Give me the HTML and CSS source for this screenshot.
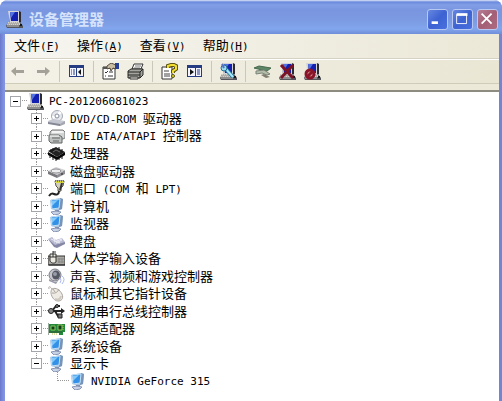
FILE: index.html
```
<!DOCTYPE html>
<html lang="zh-CN">
<head>
    <meta charset="UTF-8">
    <meta name="viewport" content="width=device-width, initial-scale=1.0">
    <title>设备管理器</title>
    <link rel="stylesheet" href="styles.css">
</head>
<body>
    <!-- 图标 -->
    <svg class="defs" aria-hidden="true">
        <symbol id="pc" viewBox="0 0 17 17">
            <path d="M3 0h10l2 1v10l-2 1H4z" fill="#2b2b33"/>
            <path d="M2 0h11v11H4z" fill="#d4d4d8"/>
            <path d="M4 1h8v9H5z" fill="#1420b0"/>
            <path d="M4 1h5L5 7z" fill="#5573e0"/>
            <path d="M2 11h12l3 4v2H1l-1-2z" fill="#55555c"/>
            <path d="M2 11h11l2 3H1z" fill="#d3d1ca"/>
            <path d="M3 12h9M2 13h11" stroke="#8a8a8a" stroke-dasharray="1 1"/>
            <path d="M1 15h12" stroke="#c9c7c0"/>
            <path d="M14 13h2v2h-2z" fill="#191919"/>
        </symbol>
        <symbol id="monitor" viewBox="0 0 17 17">
            <path d="M2 2l10-2 3 1-1 10-4 2-7-2z" fill="#a9c3dd"/>
            <path d="M12 0l3 1-1 10-3 1z" fill="#7793b8"/>
            <path d="M3 2l9-1-1 9-7 1z" fill="#3392e8" stroke="#c2dff5"/>
            <path d="M4 3l6-1-6 6z" fill="#84c9fa"/>
            <path d="M7 12h4v2H7z" fill="#7f90b0"/>
            <path d="M3 14l5-1 5 1-2 2-5 1z" fill="#c9d3e6" stroke="#8795b4"/>
        </symbol>
        <symbol id="disc" viewBox="0 0 17 17">
            <circle cx="9" cy="6" r="5.5" fill="#e5e7ed" stroke="#a5a9b4"/>
            <path d="M9 6l2-5 3 2zM9 6l-4 3-1-3z" fill="#fff"/>
            <circle cx="9" cy="6" r="2" fill="#fff" stroke="#888e9c"/>
            <path d="M0 11l5-2 12 2v2l-5 3-12-3z" fill="#c4c6d0"/>
            <path d="M0 12l12 2v2L0 14z" fill="#858895"/>
            <path d="M12 14l5-3v3l-5 2z" fill="#a4a6b0"/>
        </symbol>
        <symbol id="ide" viewBox="0 0 17 17">
            <path d="M4 2h11l2 2v6l-2 1H4L2 9V4z" fill="#d2d5d3" stroke="#777b79"/>
            <path d="M4 3h11l1 2H4z" fill="#f3f4f3"/>
            <path d="M1 7h10l3 2v6H3l-2-2z" fill="#bec2c0" stroke="#626664"/>
            <path d="M4 10h8M5 13h6" stroke="#666"/>
            <path d="M2 8h9" stroke="#fff"/>
        </symbol>
        <symbol id="cpu" viewBox="0 0 17 17">
            <path d="M0 6l8-4 9 5-8 5z" fill="#222"/>
            <path d="M0 7l9 5 8-5v3l-8 5-9-5z" fill="#050505"/>
            <path d="M3 4v3M5 3v3M11 2v3M14 4v3M2 9v4M5 11v4M8 13v3M11 12v3M14 10v4" stroke="#111"/>
            <path d="M5 7l3-2 4 2" fill="none" stroke="#666"/>
        </symbol>
        <symbol id="drive" viewBox="0 0 17 17">
            <path d="M0 8l8-4 9 3-8 5z" fill="#d0d0d3"/>
            <path d="M0 8l9 4v3l-9-4z" fill="#77777c"/>
            <path d="M9 12l8-5v4l-8 4z" fill="#8e8e94"/>
            <ellipse cx="8" cy="8" rx="5" ry="2" fill="#eee" stroke="#96969c"/>
            <path d="M13 11h2" stroke="#222"/>
        </symbol>
        <symbol id="port" viewBox="0 0 17 17">
            <path d="M7 1h9l-1 5-2 2v3h-3V8L8 6z" fill="#d2cfbd" stroke="#55534a"/>
            <path d="M7 2h9" stroke="#d9d93b" stroke-width="2"/>
            <path d="M7 1h9" stroke="#333" stroke-dasharray="1 1"/>
            <path d="M14 3l-2 7" stroke="#343434" stroke-width="2"/>
            <path d="M11 11c0 4-3 4-5 3s-3-1-5 2" fill="none" stroke="#222" stroke-width="2"/>
        </symbol>
        <symbol id="keyboard" viewBox="0 0 17 17">
            <path d="M0 6l4-2 4 3 6-2 3 4-5 4-5 1z" fill="#b8bad1"/>
            <path d="M0 6l7 6 10-3v2l-8 4-3-1z" fill="#8587a5"/>
            <path d="M3 6l9 4M6 9l8-3M5 5l2 2M8 10l6-3" stroke="#ececf7"/>
        </symbol>
        <symbol id="hid" viewBox="0 0 17 17">
            <path d="M0 6h17v9H0z" fill="#aaa9a3" stroke="#333"/>
            <path d="M2 4h6v8c-2 2-5 1-6-1z" fill="#eceae0" stroke="#333"/>
            <path d="M5 1v6M2 7h6M5 2h3" fill="none" stroke="#333"/>
            <path d="M10 9h6M10 12h6M11 8v5M14 8v5" stroke="#888"/>
            <path d="M1 15h16" stroke="#222"/>
        </symbol>
        <symbol id="sound" viewBox="0 0 17 17">
            <ellipse cx="7" cy="7" rx="6" ry="6" fill="#c4c5cd" stroke="#7b7c86"/>
            <ellipse cx="8" cy="7" rx="4" ry="4.5" fill="#555763"/>
            <circle cx="7" cy="6" r="2" fill="#989ba8"/>
            <path d="M1 11l6 3 3-1-2 3-7-3z" fill="#999ba7"/>
            <path d="M12 10q2 2 0 5M14 8q4 3 0 8" fill="none" stroke="#aab9ed"/>
        </symbol>
        <symbol id="mouse" viewBox="0 0 17 17">
            <path d="M4 4C2 1 0 1 1 4" fill="none" stroke="#b1aca6"/>
            <path d="M4 4c4-2 8 1 10 5 2 5-1 7-4 7-5 0-9-8-6-12z" fill="#eeeae4" stroke="#aaa49d"/>
            <path d="M4 8q5 1 7-4M7 7l-2-3" fill="none" stroke="#aaa49d"/>
            <path d="M7 14q5 2 6-3" fill="none" stroke="#cec8c0" stroke-width="2"/>
        </symbol>
        <symbol id="usb" viewBox="0 0 17 17">
            <path d="M2 8h13M4 8l4-5h4M7 8l3 5h4" fill="none" stroke="#222" stroke-width="2"/>
            <circle cx="3" cy="8" r="2.5" fill="#888" stroke="#222"/>
            <circle cx="9" cy="3" r="1.5" fill="#777" stroke="#222"/>
            <path d="M13 5l4 3-4 3z" fill="#222"/>
            <path d="M10 11h4v4h-4z" fill="#777" stroke="#222"/>
        </symbol>
        <symbol id="net" viewBox="0 0 17 17">
            <path d="M1 4h16v8h-2v3h-4v-2H1z" fill="#23883a"/>
            <path d="M0 3v12M1 12h13" stroke="#36563c"/>
            <path d="M3 6h4v4H3zM10 5h4v5h-4z" fill="#123d1a" stroke="#8cc65e"/>
            <path d="M4 14h6M15 5v6" stroke="#b4ba48" stroke-dasharray="1 1"/>
        </symbol>
        <symbol id="arrow-left" viewBox="0 0 17 17">
            <path d="M2 8l5-4v3h8v3H7v3z" fill="#a4a298"/>
        </symbol>
        <symbol id="arrow-right" viewBox="0 0 17 17">
            <path d="M16 8l-5-4v3H3v3h8v3z" fill="#a4a298"/>
        </symbol>
        <symbol id="pane-left" viewBox="0 0 17 17">
            <path d="M1 2h15v12H1z" fill="#253b82"/>
            <path d="M2 5h6v8H2zM9 5h6v8H9z" fill="#f4f4ff"/>
            <path d="M3 7h4M3 9h4M3 11h4" stroke="#253b82" stroke-dasharray="1 1 2"/>
            <path d="M13 6v6l-3-3z" fill="#111"/>
        </symbol>
        <symbol id="pane-right" viewBox="0 0 17 17">
            <path d="M1 2h15v12H1z" fill="#253b82"/>
            <path d="M2 5h7v8H2zM10 5h5v8h-5z" fill="#f4f4ff"/>
            <path d="M11 7h3M11 9h3M11 11h3" stroke="#253b82"/>
            <path d="M4 6v6l4-3z" fill="#111"/>
        </symbol>
        <symbol id="props" viewBox="0 0 17 17">
            <path d="M1 4h12v12H1z" fill="#fff" stroke="#333"/>
            <path d="M1 5h12" stroke="#555" stroke-width="2"/>
            <path d="M3 9l1 1 2-2M7 9h4M3 13h1M6 13h5" fill="none" stroke="#333"/>
            <path d="M5 3l4-3 5 2v4l-3-1-2 3-1-3-3 1z" fill="#c9bda4" stroke="#554c3d"/>
            <path d="M13 0h4v6h-4z" fill="#273f91"/>
        </symbol>
        <symbol id="printer" viewBox="0 0 17 17">
            <path d="M5 6l2-5h9l-2 5z" fill="#fff" stroke="#333"/>
            <path d="M8 3h6M7 5h6" stroke="#777"/>
            <path d="M1 8l3-2h12v6l-3 3H1z" fill="#a6a69f" stroke="#292929"/>
            <path d="M1 9h12l3-3M1 12h12M13 9v6" fill="none" stroke="#222"/>
            <path d="M3 14h8v2H3z" fill="#f6f4e8" stroke="#333"/>
        </symbol>
        <symbol id="help" viewBox="0 0 17 17">
            <path d="M1 4h10v12H1z" fill="#fff" stroke="#333"/>
            <path d="M3 8h5M3 11h6M3 13h6" stroke="#444"/>
            <path d="M7 5V3l3-1h3l2 1v3l-3 2v2" fill="none" stroke="#5a5313" stroke-width="4"/>
            <path d="M7 5V3l3-1h3l2 1v3l-3 2v2" fill="none" stroke="#f1df31" stroke-width="2"/>
            <circle cx="12" cy="13" r="1.5" fill="#f1df31" stroke="#5a5313"/>
        </symbol>
        <symbol id="scan" viewBox="0 0 17 17">
            <use href="#pc"/>
            <path d="M5 5l8 9" stroke="#227c9c" stroke-width="4"/>
            <path d="M5 5l8 9" stroke="#a8e8ff" stroke-width="2"/>
            <circle cx="4" cy="5" r="3" fill="#9adcf4" stroke="#237292"/>
            <path d="M2 1l2 4" stroke="#5573c0" stroke-width="2"/>
        </symbol>
        <symbol id="update" viewBox="0 0 17 17">
            <path d="M0 5l5-2 12 2-4 3-5-1z" fill="#5d8667" stroke="#47694f"/>
            <path d="M2 8l8-1 6 4-3 1-5-2-6 1z" fill="#b5bda9" stroke="#79847a"/>
            <path d="M7 12l3-1 6 3-4 1z" fill="#817e70"/>
        </symbol>
        <symbol id="remove" viewBox="0 0 17 17">
            <use href="#pc"/>
            <path d="M2 2l12 13M14 2L2 15" stroke="#7c1226" stroke-width="3"/>
        </symbol>
        <symbol id="disable" viewBox="0 0 17 17">
            <use href="#pc"/>
            <circle cx="6" cy="11" r="4" fill="#c98d87" stroke="#8b1528" stroke-width="3"/>
            <path d="M3 14l6-6" stroke="#8b1528" stroke-width="3"/>
        </symbol>
    </svg>

    <div class="window">
        <header class="title-bar">
            <svg class="icon"><use href="#pc"/></svg>
            <h1>设备管理器</h1>
            <div class="controls">
                <button class="ctl" type="button" aria-label="最小化"><svg viewBox="0 0 21 21"><path d="M4 14h7" stroke="#fff" stroke-width="3"/></svg></button>
                <button class="ctl" type="button" aria-label="最大化"><svg viewBox="0 0 21 21"><path d="M4 5h11v10H4z" fill="none" stroke="#fff"/><path d="M4 5h12" stroke="#fff" stroke-width="3"/></svg></button>
                <button class="ctl close" type="button" aria-label="关闭"><svg viewBox="0 0 21 21"><path d="M4 4l11 11M15 4L4 15" stroke="#fff" stroke-width="2"/></svg></button>
            </div>
        </header>

        <nav class="menu">
            <button type="button">文件<span class="en">(<u>F</u>)</span></button>
            <button type="button">操作<span class="en">(<u>A</u>)</span></button>
            <button type="button">查看<span class="en">(<u>V</u>)</span></button>
            <button type="button">帮助<span class="en">(<u>H</u>)</span></button>
        </nav>

        <div class="toolbar">
            <div class="group">
                <button type="button" aria-label="后退"><svg class="icon"><use href="#arrow-left"/></svg></button>
                <button type="button" aria-label="前进"><svg class="icon"><use href="#arrow-right"/></svg></button>
            </div>
            <div class="group">
                <button type="button" aria-label="控制台树"><svg class="icon"><use href="#pane-left"/></svg></button>
            </div>
            <div class="group">
                <button type="button" aria-label="属性"><svg class="icon"><use href="#props"/></svg></button>
                <button type="button" aria-label="打印"><svg class="icon"><use href="#printer"/></svg></button>
            </div>
            <div class="group">
                <button type="button" aria-label="帮助"><svg class="icon"><use href="#help"/></svg></button>
                <button type="button" aria-label="操作窗格"><svg class="icon"><use href="#pane-right"/></svg></button>
            </div>
            <div class="group">
                <button type="button" aria-label="扫描硬件改动"><svg class="icon"><use href="#scan"/></svg></button>
            </div>
            <div class="group">
                <button type="button" aria-label="更新驱动程序"><svg class="icon"><use href="#update"/></svg></button>
                <button type="button" aria-label="卸载"><svg class="icon"><use href="#remove"/></svg></button>
                <button type="button" aria-label="停用"><svg class="icon"><use href="#disable"/></svg></button>
            </div>
        </div>
        <div class="strip"></div>

        <!-- 设备树 -->
        <main class="tree">
            <div class="row root"><button class="toggle open" type="button" aria-label="折叠"></button><svg class="icon"><use href="#pc"/></svg><span class="en">PC-201206081023</span></div>
            <ul class="branch">
                <li><div class="row"><button class="toggle" type="button" aria-label="展开"></button><svg class="icon"><use href="#disc"/></svg><span><span class="en">DVD/CD-ROM </span>驱动器</span></div></li>
                <li><div class="row"><button class="toggle" type="button" aria-label="展开"></button><svg class="icon"><use href="#ide"/></svg><span><span class="en">IDE ATA/ATAPI </span>控制器</span></div></li>
                <li><div class="row"><button class="toggle" type="button" aria-label="展开"></button><svg class="icon"><use href="#cpu"/></svg><span>处理器</span></div></li>
                <li><div class="row"><button class="toggle" type="button" aria-label="展开"></button><svg class="icon"><use href="#drive"/></svg><span>磁盘驱动器</span></div></li>
                <li><div class="row"><button class="toggle" type="button" aria-label="展开"></button><svg class="icon"><use href="#port"/></svg><span>端口<span class="en"> (COM </span>和<span class="en"> LPT)</span></span></div></li>
                <li><div class="row"><button class="toggle" type="button" aria-label="展开"></button><svg class="icon"><use href="#monitor"/></svg><span>计算机</span></div></li>
                <li><div class="row"><button class="toggle" type="button" aria-label="展开"></button><svg class="icon"><use href="#monitor"/></svg><span>监视器</span></div></li>
                <li><div class="row"><button class="toggle" type="button" aria-label="展开"></button><svg class="icon"><use href="#keyboard"/></svg><span>键盘</span></div></li>
                <li><div class="row"><button class="toggle" type="button" aria-label="展开"></button><svg class="icon"><use href="#hid"/></svg><span>人体学输入设备</span></div></li>
                <li><div class="row"><button class="toggle" type="button" aria-label="展开"></button><svg class="icon"><use href="#sound"/></svg><span>声音、视频和游戏控制器</span></div></li>
                <li><div class="row"><button class="toggle" type="button" aria-label="展开"></button><svg class="icon"><use href="#mouse"/></svg><span>鼠标和其它指针设备</span></div></li>
                <li><div class="row"><button class="toggle" type="button" aria-label="展开"></button><svg class="icon"><use href="#usb"/></svg><span>通用串行总线控制器</span></div></li>
                <li><div class="row"><button class="toggle" type="button" aria-label="展开"></button><svg class="icon"><use href="#net"/></svg><span>网络适配器</span></div></li>
                <li><div class="row"><button class="toggle" type="button" aria-label="展开"></button><svg class="icon"><use href="#monitor"/></svg><span>系统设备</span></div></li>
                <li>
                    <div class="row"><button class="toggle open" type="button" aria-label="折叠"></button><svg class="icon"><use href="#monitor"/></svg><span>显示卡</span></div>
                    <ul class="branch">
                        <li><div class="row leaf"><svg class="icon"><use href="#monitor"/></svg><span class="en">NVIDIA GeForce 315</span></div></li>
                    </ul>
                </li>
            </ul>
        </main>
    </div>
</body>
</html>
```
FILE: styles.css
```
/* 初始化 */
*{
    box-sizing: border-box;
}
body{
    margin: 0;
    background: #fff;
    color: #000;
    font-family: "Liberation Sans", "Noto Sans CJK SC", sans-serif;
    font-size: 13px;
    line-height: 17px;
}
button{
    padding: 0;
    border: 0;
    background: none;
    color: inherit;
    font: inherit;
}
ul{
    margin: 0;
    padding: 0;
    list-style: none;
}
.defs{
    display: none;
}
.icon{
    display: block;
    flex: none;
    width: 17px;
    height: 17px;
}
/* 英文为半角宽度 */
.en{
    font-family: "DejaVu Sans Mono", "Liberation Mono", monospace;
    font-size: 11px;
    white-space: pre;
}

/* 窗口 */
.window{
    display: flex;
    flex-direction: column;
    min-height: 100vh;
    padding: 0 3px 0 5px;
    border-radius: 8px 8px 0 0;
    background: linear-gradient(to right, #6978cc, #8394e2 4px, #7384d3);
}

/* 标题栏 */
.title-bar{
    display: flex;
    align-items: center;
    height: 34px;
    margin: 0 -3px 0 -5px;
    padding: 5px 4px 0 6px;
    border-radius: 8px 8px 0 0;
    background: linear-gradient(#e0e7f8, #6a8add 2px, #829ee6 5px, #7995df 10px, #7b9ae2 20px, #82a6ed 29px, #6f8dd9);
}
.title-bar h1{
    flex: 1;
    margin: 0 0 0 6px;
    color: #d6e3fb;
    font-size: 15px;
    line-height: 20px;
}
.controls{
    display: flex;
    gap: 4px;
}
.ctl{
    width: 21px;
    height: 21px;
    border: 1px solid #b7c8f2;
    border-radius: 3px;
    background: linear-gradient(135deg, #6688e0, #3d62d2 50%, #4a70df);
}
.ctl.close{
    background: linear-gradient(135deg, #b77d94, #a45f76 50%, #ad6b80);
}
.ctl svg{
    display: block;
    width: 19px;
    height: 19px;
}

/* 菜单栏 */
.menu{
    display: flex;
    gap: 17px;
    height: 25px;
    padding: 0 9px;
    border-bottom: 1px solid #d5d2c3;
    background: linear-gradient(to right, #f6f5f0, #ebe8d7);
}
.menu button{
    white-space: nowrap;
}

/* 工具栏 */
.toolbar{
    display: flex;
    align-items: center;
    height: 25px;
    border-top: 1px solid #fff;
    border-bottom: 1px solid #cfccba;
    background: linear-gradient(to right, #f4f2e8, #e9e6d4);
}
.strip{
    height: 8px;
    border-bottom: 2px solid #8e8c80;
    background: #ece9d8;
}
.group{
    display: flex;
    gap: 8px;
    padding: 2px 8px;
    border-right: 1px solid #cbc8b8;
}
.group:first-child{
    padding-left: 4px;
}
.group:last-child{
    border-right: 0;
}

/* 设备树 */
.tree{
    flex: 1;
    padding-left: 5px;
    background: #fff;
}
.row{
    display: flex;
    align-items: center;
    height: 17px;
    /* 方框与图标之间的横向虚线 */
    background: repeating-linear-gradient(to right, transparent 0 1px, #999 1px 2px) 11px 8px / 6px 1px no-repeat;
    white-space: nowrap;
}
.row.root, .row.leaf, .branch > li:nth-child(even) > .row{
    height: 18px;
}
.row .icon{
    margin-right: 5px;
}
.branch{
    padding-left: 21px;
}
/* 竖向虚线 */
.branch > li{
    background: repeating-linear-gradient(#999 0 1px, #fff 1px 2px) 5px 0 / 1px 100% no-repeat;
}
.branch > li:last-child{
    background-size: 1px 9px;
}
/* 展开/折叠方框 */
.toggle{
    flex: none;
    width: 11px;
    height: 11px;
    margin-right: 6px;
    border: 1px solid #a3a6ab;
    background:
        linear-gradient(#000, #000) center / 5px 1px no-repeat,
        linear-gradient(#000, #000) center / 1px 5px no-repeat,
        #fff;
}
.toggle.open{
    background:
        linear-gradient(#000, #000) center / 5px 1px no-repeat,
        #fff;
}
.row.leaf{
    padding-left: 17px;
    background-position: 5px 8px;
    background-size: 12px 1px;
}
```
